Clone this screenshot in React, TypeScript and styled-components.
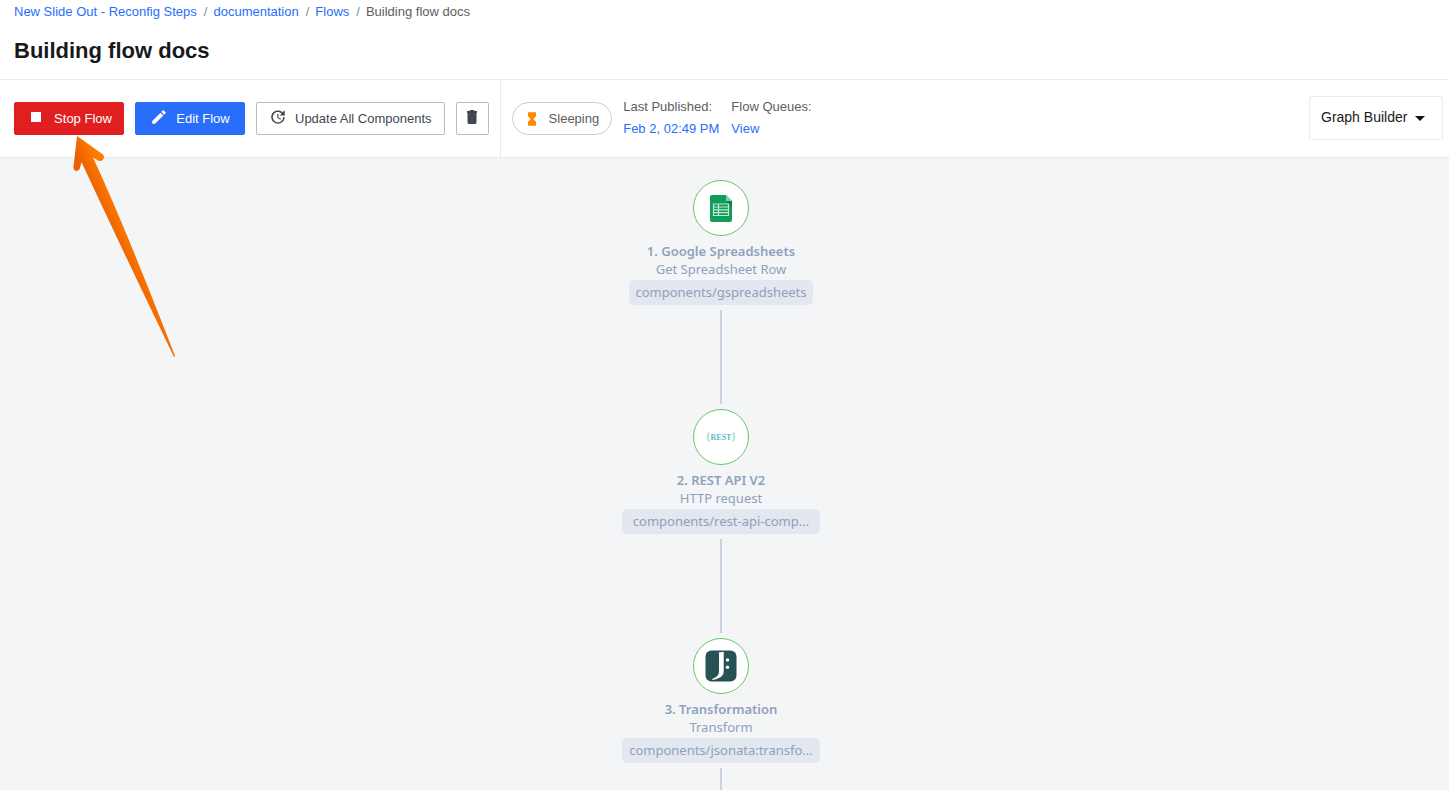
import React from "react";
import styled, { createGlobalStyle } from "styled-components";
import { MdEdit, MdHourglassFull, MdStop, MdUpdate } from "react-icons/md";

const ui = `"Liberation Sans", Arial, sans-serif`;
const graph = `"Noto Sans", "Open Sans", sans-serif`;

const GlobalStyle = createGlobalStyle`
  *, *::before, *::after { box-sizing: border-box; }
  body { margin: 0; background: #f3f5f7; font: 13px/22px ${ui}; color: #5e5e5e; }
  a { color: #286efa; text-decoration: none; }
`;

const Page = styled.div`
  position: relative;
  display: flex;
  flex-direction: column;
  height: 100vh;
  overflow: hidden;
`;

const Header = styled.header`
  flex: none;
  height: 80px;
  padding: 1px 14px 0;
  background: #fff;
  border-bottom: 1px solid #ebebeb;
`;

const Crumbs = styled.ol`
  display: flex;
  margin: 0;
  padding: 0;
  list-style: none;
`;

const Crumb = styled.li`
  & + &::before {
    content: "/";
    padding: 0 6px 0 7px;
    color: #8c8c8c;
  }
`;

const Title = styled.h1`
  margin: 13px 0 0;
  font-size: 22px;
  line-height: 30px;
  font-weight: 700;
  color: #17191c;
`;

const Toolbar = styled.div`
  flex: none;
  display: flex;
  align-items: stretch;
  height: 78px;
  background: #fff;
  border-bottom: 1px solid #e8eaec;
`;

const Actions = styled.div`
  display: flex;
  align-items: center;
  gap: 11px;
  padding: 0 11px 0 14px;
  border-right: 1px solid #ebebeb;
`;

const tones = {
  danger: { fill: "#e01f21", line: "#e01f21", text: "#fff", minWidth: 110 },
  primary: { fill: "#286efa", line: "#286efa", text: "#fff", minWidth: 110 },
  plain: { fill: "#fff", line: "#bdbdbd", text: "#43474f", minWidth: 0 },
};

const Button = styled.button<{ $tone: keyof typeof tones }>`
  display: flex;
  align-items: center;
  justify-content: center;
  gap: 8px;
  min-width: ${(p) => tones[p.$tone].minWidth}px;
  height: 33px;
  padding: 1px ${(p) => (p.$tone === "plain" ? 12 : 11)}px 0;
  border: 1px solid ${(p) => tones[p.$tone].line};
  border-radius: 2px;
  background: ${(p) => tones[p.$tone].fill};
  color: ${(p) => tones[p.$tone].text};
  font: 13px/22px ${ui};
  white-space: nowrap;

  svg { margin-bottom: 4px; }
`;

const IconButton = styled(Button)`
  width: 33px;
  padding: 1px 0 0;
`;

const Status = styled.div`
  flex: 1;
  display: flex;
  align-items: center;
  gap: 11px;
  padding: 0 6px 0 11px;
`;

const Pill = styled.div`
  display: flex;
  align-items: center;
  gap: 9px;
  height: 33px;
  padding: 0 12px 0 11px;
  border: 1px solid #cccccc;
  border-radius: 17px;

  svg { color: #ff8a00; }
`;

const Facts = styled.dl`
  display: flex;
  gap: 12px;
  margin: 0 0 2px;

  dd { margin: 0; }
`;

const Picker = styled.label`
  position: relative;
  margin: 0 0 1px auto;
  width: 134px;

  svg {
    position: absolute;
    right: 18px;
    top: 20px;
    pointer-events: none;
  }
`;

const Select = styled.select`
  display: block;
  appearance: none;
  width: 100%;
  height: 44px;
  padding: 0 32px 2px 11px;
  border: 1px solid #ebebeb;
  border-radius: 2px;
  background: #fff;
  color: #17191c;
  font: 14px/22px ${ui};
`;

const Canvas = styled.main`
  flex: 1;
  min-height: 0;
  overflow: hidden;
  padding: 22px 7px 0 0;
  font-family: ${graph};
  font-size: 13px;
  line-height: 18px;
  color: #8fa1bd;
`;

const Step = styled.section`
  display: flex;
  flex-direction: column;
  align-items: center;
`;

const Badge = styled.div`
  display: flex;
  align-items: center;
  justify-content: center;
  width: 56px;
  height: 56px;
  margin-bottom: 6px;
  border: 1px solid #63c966;
  border-radius: 50%;
  background: #fff;
`;

const StepName = styled.h2`
  margin: 0;
  font-size: 13px;
  line-height: 18px;
  font-weight: 600;
`;

const Chip = styled.code<{ $clipped: boolean }>`
  min-width: ${(p) => (p.$clipped ? "198px" : "0")};
  height: 25px;
  margin-top: 2px;
  padding: 0 6px;
  border-radius: 5px;
  background: #e3e7ef;
  font: 13px/25px ${graph};
  text-align: center;
  white-space: nowrap;
`;

const Connector = styled.div`
  width: 2px;
  height: 94px;
  margin: 5px 0;
  background: #cbd1e0;
`;

const Pointer = styled.svg`
  position: absolute;
  left: 70px;
  top: 132px;
  pointer-events: none;
`;

const TrashIcon = () => (
  <svg width="12" height="14" viewBox="0 0 12 14" fill="currentColor" aria-hidden="true">
    <path d="M4 0h4l.7 1H11v2H1V1h2.300zM1.500 3h9v9.500A1.500 1.500 0 0 1 9 14H3a1.500 1.500 0 0 1-1.500-1.500z" />
  </svg>
);

const SheetsLogo = () => (
  <svg width="22" height="27" viewBox="0 0 22 27" aria-hidden="true">
    <path d="M2 0h14l6 6v19a2 2 0 0 1-2 2H2a2 2 0 0 1-2-2V2a2 2 0 0 1 2-2z" fill="#0f9d58" />
    <path d="M16 0l6 6h-6z" fill="#87ceac" />
    <path d="M16 6h6v6z" fill="#0b7f47" />
    <path d="M3.500 9h15v11.500h-15zM3.500 12h15M3.500 14.800h15M3.500 17.600h15M8.500 9v11.500" fill="none" stroke="#c4e6d5" strokeWidth="1.200" />
  </svg>
);

const RestLogo = () => (
  <svg width="30" height="12" viewBox="0 0 30 12" fontFamily="Liberation Serif, serif" fontWeight="700" aria-hidden="true">
    <text x="15" y="9" textAnchor="middle" fontSize="8" fill="#62b9d6">REST</text>
    <path d="M3.500 2q-1.500 0-1.500 1.500v1.500q0 1-1 1 1 0 1 1v1.500q0 1.500 1.500 1.500M26.500 2q1.500 0 1.500 1.500v1.500q0 1 1 1-1 0-1 1v1.500q0 1.500-1.500 1.500" fill="none" stroke="#8fdcc0" strokeWidth="1.300" />
  </svg>
);

const JsonataLogo = () => (
  <svg width="32" height="32" viewBox="0 0 32 32" aria-hidden="true">
    <rect x=".5" y=".5" width="31" height="31" rx="6" fill="#285154" />
    <path d="M13.500 2.500l5.200-.8v19.800c0 4.500-4 7-11.300 8.500l-.2-1c4.800-1.800 6.800-4 6.800-8V3.500z" fill="#fff" />
    <circle cx="22.500" cy="10" r="1.700" fill="#fff" />
    <circle cx="22.500" cy="17.300" r="1.700" fill="#fff" />
  </svg>
);

const steps = [
  { name: "Google Spreadsheets", action: "Get Spreadsheet Row", repo: "components/gspreadsheets", Logo: SheetsLogo },
  { name: "REST API V2", action: "HTTP request", repo: "components/rest-api-comp...", Logo: RestLogo },
  { name: "Transformation", action: "Transform", repo: "components/jsonata:transfo...", Logo: JsonataLogo },
];

export default function App() {
  return (
    <Page>
      <GlobalStyle />
      <Header>
        <nav aria-label="Breadcrumb">
          <Crumbs>
            <Crumb><a href="#workspace">New Slide Out - Reconfig Steps</a></Crumb>
            <Crumb><a href="#documentation">documentation</a></Crumb>
            <Crumb><a href="#flows">Flows</a></Crumb>
            <Crumb>Building flow docs</Crumb>
          </Crumbs>
        </nav>
        <Title>Building flow docs</Title>
      </Header>
      <Toolbar>
        <Actions>
          <Button type="button" $tone="danger"><MdStop size={20} />Stop Flow</Button>
          <Button type="button" $tone="primary"><MdEdit size={18} />Edit Flow</Button>
          <Button type="button" $tone="plain"><MdUpdate size={18} />Update All Components</Button>
          <IconButton type="button" $tone="plain" aria-label="Delete flow"><TrashIcon /></IconButton>
        </Actions>
        <Status>
          <Pill><MdHourglassFull size={16} />Sleeping</Pill>
          <Facts>
            <div>
              <dt>Last Published:</dt>
              <dd><a href="#version">Feb 2, 02:49 PM</a></dd>
            </div>
            <div>
              <dt>Flow Queues:</dt>
              <dd><a href="#queues">View</a></dd>
            </div>
          </Facts>
          <Picker>
            <Select aria-label="View" defaultValue="graph">
              <option value="graph">Graph Builder</option>
            </Select>
            <svg width="10" height="5" viewBox="0 0 10 5" aria-hidden="true"><path d="M0 0h10L5 5z" fill="#111" /></svg>
          </Picker>
        </Status>
      </Toolbar>
      <Canvas>
        {steps.map(({ name, action, repo, Logo }, i) => (
          <Step key={name}>
            <Badge><Logo /></Badge>
            <StepName>{i + 1}. {name}</StepName>
            <span>{action}</span>
            <Chip $clipped={repo.endsWith("...")}>{repo}</Chip>
            <Connector />
          </Step>
        ))}
      </Canvas>
      <Pointer width="110" height="230" viewBox="0 0 110 230" aria-hidden="true">
        <defs>
          <linearGradient id="pointer" gradientUnits="userSpaceOnUse" x1="32" y1="82" x2="48" y2="75">
            <stop offset="0" stopColor="#e86000" />
            <stop offset="1" stopColor="#ff7a00" />
          </linearGradient>
        </defs>
        <path d="M7 4L33 22.500Q35 25 33 27.500Q31 30 28 28.500L23 25.500Q54 92 105 224L104 225Q50 113 11.500 30L10 36Q9 39 6 39Q3 38 3.500 35z" fill="url(#pointer)" />
      </Pointer>
    </Page>
  );
}
